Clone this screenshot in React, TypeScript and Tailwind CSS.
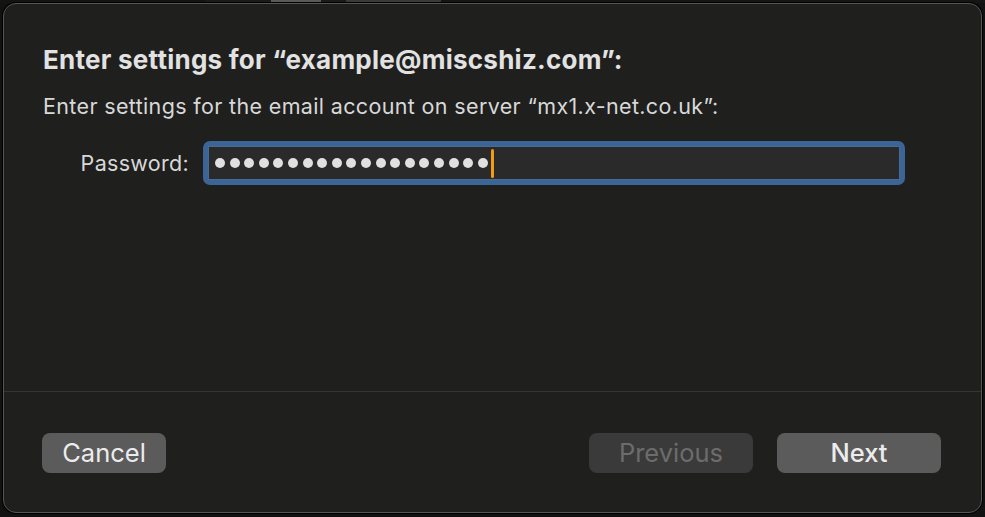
import React from "react";

const font = { fontFamily: "Inter, 'Noto Sans', sans-serif" };

function Dots({ count }: { count: number }) {
  return (
    <div className="flex items-center gap-[4.6px]">
      {Array.from({ length: count }).map((_, i) => (
        <span key={i} className="block w-[10px] h-[10px] rounded-full bg-[#e0e0e0]" />
      ))}
    </div>
  );
}

export default function App() {
  return (
    <div className="w-[985px] h-[517px] bg-[#121212] flex flex-col overflow-hidden" style={font}>
      {/* sliver of the window behind */}
      <div className="h-[3px] flex shrink-0">
        <div className="w-[205px] bg-[#141414]" />
        <div className="w-[66px] bg-[#1a1a1a]" />
        <div className="w-[50px] bg-[#5a5a5a]" />
        <div className="w-[25px] bg-[#1a1a1a]" />
        <div className="w-[95px] bg-[#3a3a3a]" />
        <div className="flex-1 bg-[#151515]" />
      </div>

      <div className="mx-[3px] h-[510px] rounded-[13px] border border-[#565656] shadow-[0_0_0_1px_#000] bg-[#1f1f1e] flex flex-col text-[#e2e2e2]">
        <div className="h-[387px] pl-[39px] pr-[76px] pt-[40px] flex flex-col">
          <h1 className="text-[26px] font-bold leading-[32px] tracking-[0.25px]">
            Enter settings for “example@miscshiz.com”:
          </h1>
          <p className="mt-[16px] text-[21.5px] leading-[28px] tracking-[0.35px] text-[#d8d8d8]">
            Enter settings for the email account on server “mx1.x-net.co.uk”:
          </p>

          <div className="mt-[21px] flex items-center">
            <label className="w-[160px] text-right pr-[14px] text-[21.5px] tracking-[0.3px] text-[#d8d8d8]">Password:</label>
            <div className="flex-1 h-[44px] rounded-[7px] bg-[#3c6597] p-[5px]">
              <div className="h-full bg-[#2a2a2a] border border-[#4a6a94] flex items-center pl-[6px]">
                <Dots count={19} />
                <span className="ml-[3px] block w-[3px] h-[29px] rounded-full bg-[#f39c12]" />
              </div>
            </div>
          </div>
        </div>

        <div className="h-px bg-[#353535]" />

        <div className="flex-1 flex items-start pt-[41px] pl-[38px] pr-[40px]">
          <button className="w-[124px] h-[40px] rounded-[8px] bg-[#5b5b5b] text-[25.5px] text-[#ececec]">
            Cancel
          </button>
          <div className="flex-1" />
          <button className="w-[164px] h-[40px] rounded-[8px] bg-[#3a3a3a] text-[25.5px] text-[#6c6c6c]">
            Previous
          </button>
          <button className="ml-[24px] w-[164px] h-[40px] rounded-[8px] bg-[#5b5b5b] text-[25.5px] font-medium text-[#ececec]">
            Next
          </button>
        </div>
      </div>
    </div>
  );
}
